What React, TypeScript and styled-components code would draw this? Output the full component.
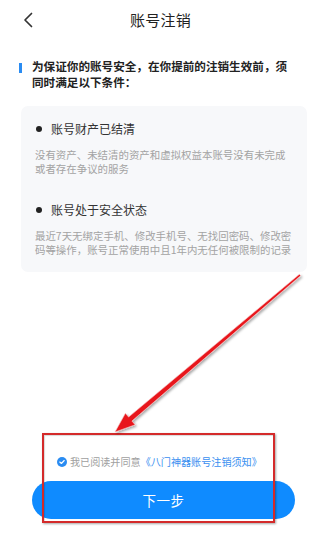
import React from "react";
import styled, { createGlobalStyle } from "styled-components";

const Global = createGlobalStyle`
  html, body { margin: 0; padding: 0; background: #fff; }
  body { font-family: "Noto Sans CJK SC", "Noto Sans", sans-serif; }
  * { box-sizing: border-box; }
`;

const Page = styled.div`
  position: relative;
  width: 321px;
  height: 536px;
  display: flex;
  flex-direction: column;
  overflow: hidden;
`;

const Header = styled.div`
  position: relative;
  height: 40px;
  display: flex;
  align-items: center;
  justify-content: center;
`;

const Back = styled.div`
  position: absolute;
  left: 22px;
  top: 12px;
  width: 14px;
  height: 16px;
  display: flex;
`;

const Title = styled.div`
  font-size: 15px;
  color: #222;
  line-height: 20px;
  letter-spacing: 0.2px;
`;

const Heading = styled.div`
  display: flex;
  align-items: flex-start;
  padding: 18px 30px 0 19px;
  gap: 10px;
`;

const Bar = styled.div`
  width: 3px;
  height: 10px;
  margin-top: 5px;
  background: #2a8cf2;
  flex: none;
`;

const HeadingText = styled.div`
  font-size: 11.6px;
  line-height: 16px;
  font-weight: 700;
  color: #222;
`;

const Card = styled.div`
  margin: 16px 14px 0 21px;
  background: #f7f8fa;
  border-radius: 7px;
  padding: 15px 12px 15px 14px;
  display: flex;
  flex-direction: column;
  gap: 26px;
`;

const Item = styled.div`
  display: flex;
  flex-direction: column;
  gap: 11px;
`;

const ItemTitle = styled.div`
  display: flex;
  align-items: center;
  gap: 9px;
  font-size: 12px;
  line-height: 16px;
  color: #333;
`;

const Dot = styled.span`
  width: 6px;
  height: 6px;
  border-radius: 50%;
  background: #222;
  margin-left: 1px;
`;

const Desc = styled.div`
  font-size: 10.45px;
  line-height: 14px;
  color: #a3a3a3;
`;

const Footer = styled.div`
  margin-top: auto;
  padding-bottom: 17px;
  display: flex;
  flex-direction: column;
  gap: 12px;
`;

const Agree = styled.div`
  display: flex;
  align-items: center;
  padding-left: 57px;
  font-size: 10.1px;
  line-height: 14px;
  color: #a0a0a0;
  gap: 3px;
`;

const Check = styled.span`
  width: 10px;
  height: 10px;
  border-radius: 50%;
  background: #2a8cf2;
  display: flex;
  align-items: center;
  justify-content: center;
`;

const Link = styled.span`
  color: #3a8ff0;
`;

const Button = styled.div`
  margin: 0 26px 0 32px;
  height: 38px;
  border-radius: 19px;
  background: #0f8bff;
  color: #fff;
  font-size: 13.5px;
  display: flex;
  align-items: center;
  justify-content: center;
  letter-spacing: 0.5px;
`;

const RedBox = styled.div`
  position: absolute;
  left: 42px;
  top: 433px;
  width: 233px;
  height: 90px;
  border: 2px solid #d42a2a;
  box-shadow: 1px 1px 2px rgba(0, 0, 0, 0.35), inset 1px 1px 1px rgba(0,0,0,0.15);
  pointer-events: none;
`;

const ArrowSvg = styled.svg`
  position: absolute;
  left: 0;
  top: 0;
  width: 321px;
  height: 536px;
  pointer-events: none;
`;

export default function App() {
  const sx = 300, sy = 275, tx = 115, ty = 432;
  const dx = tx - sx, dy = ty - sy;
  const len = Math.hypot(dx, dy);
  const ux = dx / len, uy = dy / len;
  const nx = -uy, ny = ux;
  const headLen = 20, headW = 7.5;
  const bx = tx - headLen * ux, by = ty - headLen * uy;
  const p = (x: number, y: number) => `${x.toFixed(1)},${y.toFixed(1)}`;
  const w0 = 0.9, w1 = 2.6;
  const pts = [
    p(sx + w0 * nx, sy + w0 * ny),
    p(bx + w1 * nx, by + w1 * ny),
    p(bx + headW * nx, by + headW * ny),
    p(tx, ty),
    p(bx - headW * nx, by - headW * ny),
    p(bx - w1 * nx, by - w1 * ny),
    p(sx - w0 * nx, sy - w0 * ny),
  ].join(" ");

  return (
    <>
      <Global />
      <Page>
        <Header>
          <Back>
            <svg width="14" height="16" viewBox="0 0 14 16">
              <path d="M9.5 1.5 L3 8 L9.5 14.5" fill="none" stroke="#333" strokeWidth="1.7" strokeLinecap="round" strokeLinejoin="round" />
            </svg>
          </Back>
          <Title>账号注销</Title>
        </Header>
        <Heading>
          <Bar />
          <HeadingText>为保证你的账号安全，在你提前的注销生效前，须同时满足以下条件：</HeadingText>
        </Heading>
        <Card>
          <Item>
            <ItemTitle><Dot />账号财产已结清</ItemTitle>
            <Desc>没有资产、未结清的资产和虚拟权益本账号没有未完成或者存在争议的服务</Desc>
          </Item>
          <Item>
            <ItemTitle><Dot />账号处于安全状态</ItemTitle>
            <Desc>最近7天无绑定手机、修改手机号、无找回密码、修改密码等操作，账号正常使用中且1年内无任何被限制的记录</Desc>
          </Item>
        </Card>
        <Footer>
          <Agree>
            <Check>
              <svg width="6" height="6" viewBox="0 0 6 6">
                <path d="M0.8 3 L2.4 4.5 L5.2 1.5" fill="none" stroke="#fff" strokeWidth="1.1" strokeLinecap="round" strokeLinejoin="round" />
              </svg>
            </Check>
            <span>我已阅读并同意<Link>《八门神器账号注销须知》</Link></span>
          </Agree>
          <Button>下一步</Button>
        </Footer>
        <RedBox />
        <ArrowSvg viewBox="0 0 321 536">
          <defs>
            <filter id="sh" x="-20%" y="-20%" width="140%" height="140%">
              <feDropShadow dx="1.5" dy="1.5" stdDeviation="1" floodColor="#000" floodOpacity="0.35" />
            </filter>
          </defs>
          <polygon points={pts} fill="#e8141a" stroke="#f6c8c8" strokeWidth="0.6" strokeLinejoin="round" filter="url(#sh)" />
        </ArrowSvg>
      </Page>
    </>
  );
}
